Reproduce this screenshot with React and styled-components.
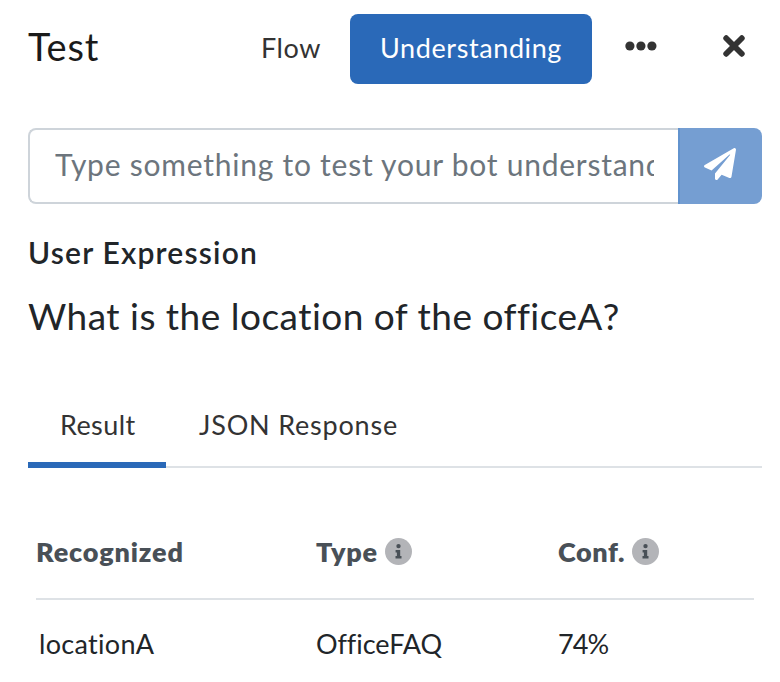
import React from "react";
import styled, { createGlobalStyle } from "styled-components";

const GlobalStyle = createGlobalStyle`
  * { box-sizing: border-box; }
  body {
    margin: 0;
    background: #fff;
    color: #212529;
    font-family: Lato, "Liberation Sans", sans-serif;
    font-variant-ligatures: none;
  }
`;

const Panel = styled.main`
  width: 780px;
  height: 682px;
  padding: 14px 18px 0 28px;
  overflow: hidden;
`;

const Header = styled.header`
  display: flex;
  height: 70px;
  margin-right: -18px;
`;

const Title = styled.h1`
  flex: none;
  margin: 0;
  width: 204px;
  font-size: 38px;
  font-weight: 400;
  line-height: 64px;
  letter-spacing: 0.8px;
  color: #1a1a1a;
`;

const ModeButton = styled.button`
  flex: none;
  width: ${(p) => (p.$active ? 242 : 118)}px;
  height: 70px;
  padding: 0 0 3px;
  border: 0;
  border-radius: 8px;
  font: 400 27px Lato, "Liberation Sans", sans-serif;
  letter-spacing: 0.6px;
  color: ${(p) => (p.$active ? "#fff" : "#333")};
  background: ${(p) => (p.$active ? "#2a69b8" : "transparent")};
`;

const IconButton = styled.button`
  flex: none;
  display: flex;
  align-items: center;
  justify-content: center;
  width: ${(p) => p.$width}px;
  height: 64px;
  padding: 0;
  border: 0;
  background: none;
  color: #333;
`;

const InputGroup = styled.form`
  display: flex;
  height: 76px;
  margin: 44px 0 0;
`;

const TestInput = styled.input`
  flex: 1;
  min-width: 0;
  padding: 0 24px 4px 25px;
  border: 2px solid #ced4da;
  border-right: 0;
  border-radius: 8px 0 0 8px;
  outline: 0;
  font: 400 30px Lato, "Liberation Sans", sans-serif;
  letter-spacing: 0.76px;
  &::placeholder {
    color: #6c757d;
    opacity: 1;
  }
`;

const SendButton = styled.button`
  display: flex;
  align-items: center;
  justify-content: center;
  width: 84px;
  padding: 0 2px 4px 0;
  border: 0;
  border-left: 2px solid #6293ce;
  border-radius: 0 8px 8px 0;
  background: #759ed2;
  color: #fff;
`;

const SectionTitle = styled.h2`
  margin: 32px 0 0;
  font-size: 30px;
  font-weight: 600;
  line-height: 32px;
  letter-spacing: 1.2px;
`;

const Expression = styled.p`
  margin: 26px 0 0;
  font-size: 37px;
  line-height: 44px;
  letter-spacing: 0.48px;
`;

const Tabs = styled.nav`
  display: flex;
  height: 88px;
  margin-top: 42px;
  box-shadow: inset 0 -2px #dee2e6;
`;

const Tab = styled.button`
  padding: 6px 0 0 ${(p) => (p.$active ? 32 : 33)}px;
  border: 0;
  border-bottom: 6px solid ${(p) => (p.$active ? "#2a69b8" : "transparent")};
  background: none;
  text-align: left;
  width: ${(p) => (p.$active ? "138px" : "auto")};
  font: 400 27px Lato, "Liberation Sans", sans-serif;
  letter-spacing: ${(p) => (p.$active ? 0.4 : 0.8)}px;
  color: #333;
`;

const Results = styled.section`
  margin: 38px 8px 0;
`;

const Row = styled.div`
  display: grid;
  grid-template-columns: 280px 242px 1fr;
  align-items: center;
  height: ${(p) => (p.$head ? 94 : 88)}px;
  padding-bottom: 2px;
  font-size: 27px;
  border-bottom: ${(p) => (p.$head ? "2px solid #dee2e6" : "0")};
  font-weight: ${(p) => (p.$head ? 800 : 400)};
  color: ${(p) => (p.$head ? "#495057" : "#212529")};
`;

const Cell = styled.div`
  display: flex;
  align-items: center;
  white-space: nowrap;
  padding-left: ${(p) => p.$indent || 0}px;
  letter-spacing: ${(p) => p.$tracking}px;
`;

const InfoIcon = styled.svg`
  display: block;
  width: 27px;
  height: 27px;
  margin-left: ${(p) => p.$gap}px;
`;

function Info({ gap }) {
  return (
    <InfoIcon $gap={gap} viewBox="0 0 27 27" aria-label="Info">
      <circle cx="13.5" cy="13.5" r="13.5" fill="#b3b4b8" />
      <circle cx="13.5" cy="8.1" r="2.2" fill="#495057" />
      <path d="M10.6 12h4.6v6h1.3v2.4h-6V18h1.4v-3.6h-1.3z" fill="#495057" />
    </InfoIcon>
  );
}

export default function App() {
  return (
    <>
      <GlobalStyle />
      <Panel>
        <Header>
          <Title>Test</Title>
          <ModeButton>Flow</ModeButton>
          <ModeButton $active>Understanding</ModeButton>
          <IconButton $width={97} aria-label="More">
            <svg width="32" height="10" viewBox="0 0 32 10" fill="currentColor">
              <circle cx="4.9" cy="5" r="4.6" />
              <circle cx="15.9" cy="5" r="4.6" />
              <circle cx="26.9" cy="5" r="4.6" />
            </svg>
          </IconButton>
          <IconButton $width={90} aria-label="Close">
            <svg width="22" height="22" viewBox="0 0 22 22" fill="none">
              <path d="M3.2 3.2l15.6 15.6M18.8 3.2L3.2 18.8" stroke="currentColor" strokeWidth="5.8" strokeLinecap="round" />
            </svg>
          </IconButton>
        </Header>
        <InputGroup>
          <TestInput placeholder="Type something to test your bot understanding" />
          <SendButton type="button" aria-label="Send">
            <svg width="32" height="32" viewBox="0 0 512 512" fill="currentColor">
              <path d="M476 3.2L12.5 270.6c-18.1 10.4-15.8 35.6 2.2 43.2L121 358.4l287.3-253.2c5.5-4.9 13.3 2.6 8.6 8.3L176 407v80.5c0 23.6 28.5 32.9 42.5 15.8L282 426l124.6 52.2c14.2 6 30.4-2.9 33-18.2l72-432C515 7.8 493.3-6.8 476 3.2z" />
            </svg>
          </SendButton>
        </InputGroup>
        <SectionTitle>User Expression</SectionTitle>
        <Expression>What is the location of the officeA?</Expression>
        <Tabs>
          <Tab $active>Result</Tab>
          <Tab>JSON Response</Tab>
        </Tabs>
        <Results>
          <Row $head>
            <Cell $tracking={0.85}>Recognized</Cell>
            <Cell $tracking={0.75}>Type<Info gap={7} /></Cell>
            <Cell $tracking={0.6}>Conf.<Info gap={7} /></Cell>
          </Row>
          <Row>
            <Cell $indent={3} $tracking={0.3}>locationA</Cell>
            <Cell $tracking={-0.05}>OfficeFAQ</Cell>
            <Cell $tracking={-0.9}>74%</Cell>
          </Row>
        </Results>
      </Panel>
    </>
  );
}
